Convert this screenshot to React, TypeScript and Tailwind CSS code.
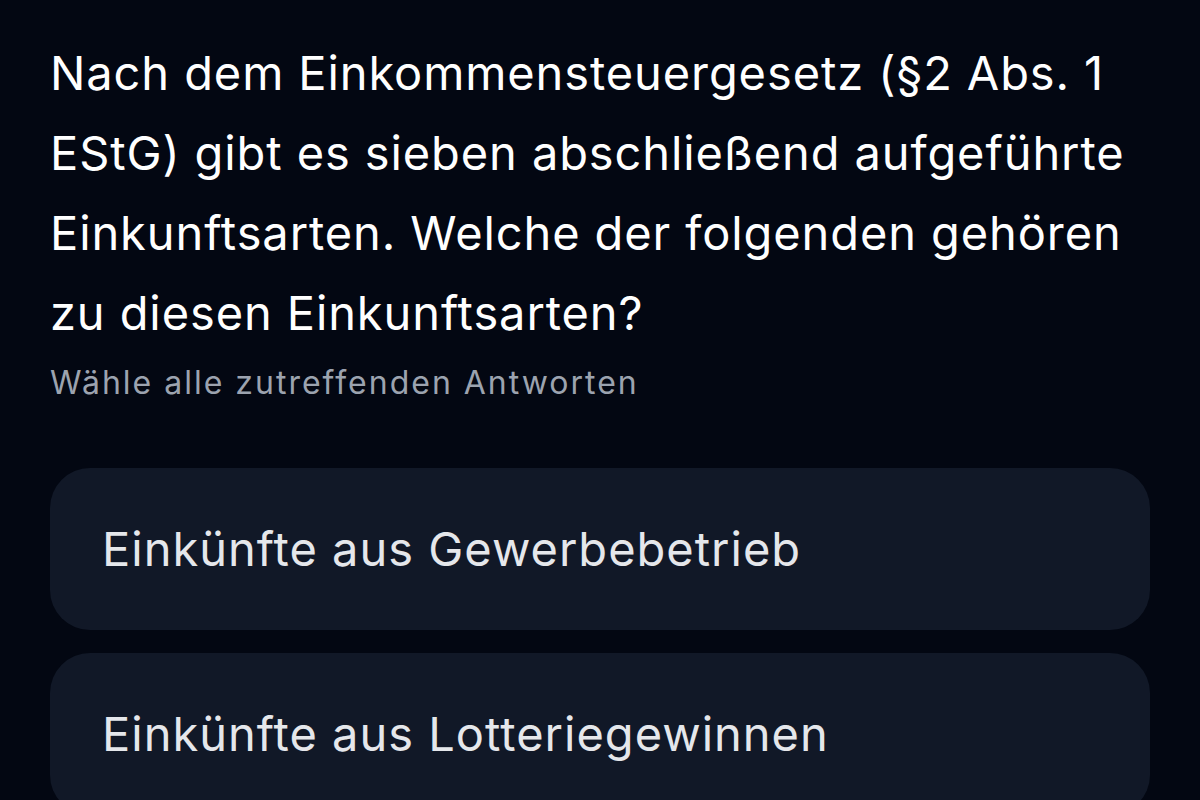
export default function App() {
  return (
    <div
      className="min-h-screen w-full bg-[#030712] overflow-hidden"
      style={{ fontFamily: 'Inter, "Noto Sans", sans-serif' }}
    >
      <div className="px-[50px] pt-[33px]">
        <h1 className="text-[47px] leading-[80px] text-white font-normal tracking-[0.9px]">
          Nach dem Einkommensteuergesetz (§2 Abs. 1 EStG) gibt es sieben abschließend aufgeführte
          Einkunftsarten. Welche der folgenden gehören zu diesen Einkunftsarten?
        </h1>
        <p className="text-[32px] leading-[36px] text-[#9ca3af] mt-[12px] tracking-[2px]">
          Wähle alle zutreffenden Antworten
        </p>
        <div className="mt-[67px] flex flex-col gap-[23px]">
          <button className="w-full h-[162px] rounded-[40px] bg-[#111827] px-[52px] text-left text-[47px] tracking-[1px] text-[#e5e7eb]">
            Einkünfte aus Gewerbebetrieb
          </button>
          <button className="w-full h-[162px] rounded-[40px] bg-[#111827] px-[52px] text-left text-[47px] tracking-[1px] text-[#e5e7eb]">
            Einkünfte aus Lotteriegewinnen
          </button>
        </div>
      </div>
    </div>
  );
}
